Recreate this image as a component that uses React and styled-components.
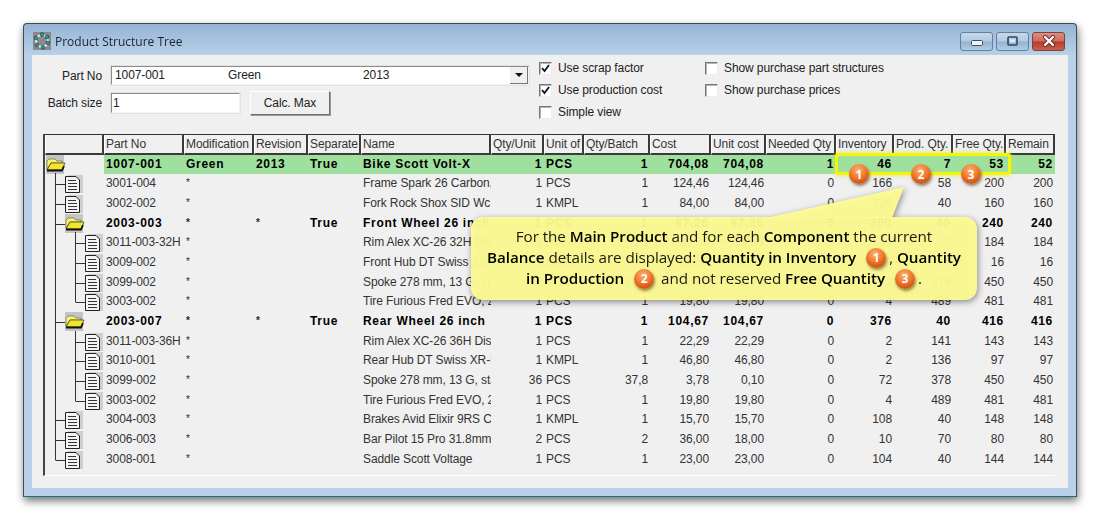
import React from 'react';
import styled, { createGlobalStyle } from 'styled-components';

const GlobalStyle = createGlobalStyle`
  html, body {
    margin: 0;
    padding: 0;
    background: #fff;
  }
  body {
    font-family: "Liberation Sans", Arial, sans-serif;
    font-size: 12px;
    letter-spacing: -0.1px;
    color: #222;
  }
`;

const COLUMNS = '59px 80px 70px 54px 53px 130px 53px 40px 66px 61px 55px 70px 58px 59px 53px 49px';
const ROW_HEIGHT = 19.67;

// Page + window frame
const Page = styled.div`
  width: 1099px;
  height: 519px;
  padding: 23px 0 0 23px;
  box-sizing: border-box;
  overflow: hidden;
`;

const Window = styled.div`
  width: 1054px;
  height: 474px;
  box-sizing: border-box;
  display: flex;
  flex-direction: column;
  border: 1px solid #3c4c58;
  border-bottom-color: #1f6f84;
  border-radius: 4px 4px 0 0;
  background: linear-gradient(180deg, #97b4d3 0, #b9d1ea 32px, #b9d1ea 100%);
  box-shadow: 1px 4px 9px rgba(0, 0, 0, 0.55);
  filter: blur(0.4px);
`;

const TitleBar = styled.div`
  height: 31px;
  flex: none;
  box-sizing: border-box;
  display: flex;
  align-items: center;
  padding: 3px 11px 0 9px;
  gap: 4px;
  font-family: "Open Sans", sans-serif;
  font-size: 12px;
  letter-spacing: 0;
  color: #1c2630;
`;

const TitleText = styled.span`
  flex: 1;
`;

const WindowButtons = styled.div`
  display: flex;
  gap: 3px;
`;

const WindowButton = styled.div`
  width: 33px;
  height: 19px;
  box-sizing: border-box;
  display: flex;
  align-items: center;
  justify-content: center;
  border: 1px solid ${p => (p.$close ? '#7d4339' : '#64809f')};
  border-radius: 3px;
  background: ${p =>
    p.$close
      ? 'linear-gradient(180deg, #dc8f83 0, #cf6a5c 48%, #b8392a 52%, #c9624f 100%)'
      : 'linear-gradient(180deg, #c6d8ea 0, #b3cae2 48%, #94b2d1 52%, #b3cce5 100%)'};
`;

const Client = styled.div`
  flex: 1;
  margin: 0 8px 8px;
  background: #f0f0f0;
  display: flex;
  flex-direction: column;
`;

// Form at the top
const Form = styled.div`
  height: 79px;
  flex: none;
  box-sizing: border-box;
  padding-top: 2px;
  display: flex;
`;

const Fields = styled.div`
  width: 507px;
  flex: none;
  margin-top: 8px;
  display: grid;
  grid-template-columns: 70px 1fr;
  grid-template-rows: 21px 23px;
  column-gap: 8px;
  row-gap: 5px;
  align-items: center;
`;

const FieldLabel = styled.label`
  text-align: right;
`;

const Sunken = styled.div`
  box-sizing: border-box;
  height: ${p => p.$height}px;
  width: ${p => p.$width}px;
  background: #fff;
  border: 2px solid;
  border-color: #8b8b8b #f4f4f4 #f4f4f4 #8b8b8b;
  outline: 1px solid #e2e2e2;
  outline-offset: -1px;
`;

const ComboBox = styled(Sunken)`
  display: flex;
  align-items: center;
  padding: 0 0 2px 3px;
`;

const ComboPart = styled.span`
  width: ${p => p.$width}px;
  flex: none;
`;

const ComboArrow = styled.div`
  margin: 2px 0 0 auto;
  width: 18px;
  height: 17px;
  display: flex;
  align-items: center;
  justify-content: center;
  background: #f0f0f0;
  border-right: 1px solid #777;
  border-bottom: 1px solid #777;
  box-sizing: border-box;
  &::after {
    content: '';
    border: 4px solid transparent;
    border-top: 4px solid #111;
    border-bottom: 0;
  }
`;

const BatchRow = styled.div`
  display: flex;
  align-items: center;
  gap: 9px;
`;

const BatchInput = styled(Sunken)`
  padding-left: 1px;
  line-height: 18px;
`;

const CalcButton = styled.div`
  width: 80px;
  height: 24px;
  box-sizing: border-box;
  display: flex;
  align-items: center;
  justify-content: center;
  background: #f0f0f0;
  border: 1px solid;
  border-color: #fff #707070 #707070 #fff;
  box-shadow: 1px 1px 0 #9a9a9a;
`;

const OptionColumn = styled.div`
  width: ${p => p.$width}px;
  flex: none;
  display: flex;
  flex-direction: column;
`;

const Option = styled.div`
  height: 22px;
  display: flex;
  align-items: center;
  gap: 6px;
`;

const CheckBox = styled.div`
  width: 13px;
  height: 13px;
  box-sizing: border-box;
  background: #fff;
  border: 1px solid;
  border-color: #777 #eee #eee #777;
  box-shadow: inset 1px 1px 0 #b5b5b5;
  display: flex;
`;

// Grid
const TableFrame = styled.div`
  position: relative;
  margin: 0 13px 12px 11px;
  flex: 1;
  box-sizing: border-box;
  border-top: 1px solid #333;
  border-left: 2px solid #444;
  border-bottom: 1px solid #fff;
`;

const Row = styled.div`
  display: grid;
  grid-template-columns: ${COLUMNS};
  height: ${ROW_HEIGHT}px;
`;

const HeaderCell = styled.div`
  height: 20px;
  box-sizing: border-box;
  border-right: 2px solid #3a3a3a;
  border-bottom: 2px solid #3a3a3a;
  border-left: 1px solid #fff;
  background: #f0f0f0;
  padding: 2px 0 0 1px;
  white-space: nowrap;
  overflow: hidden;
  color: #333;
`;

const Cell = styled.div`
  white-space: nowrap;
  overflow: hidden;
  line-height: ${ROW_HEIGHT}px;
  text-align: ${p => p.$align || 'left'};
  padding: 0 0 0 2px;
  margin-right: ${p => (p.$align === 'right' ? 2 : 0)}px;
  box-sizing: border-box;
  background: ${p => (p.$main ? '#9fe09f' : 'transparent')};
  color: ${p => (p.$bold ? '#000' : '#333')};
  font-weight: ${p => (p.$bold ? 700 : 400)};
  letter-spacing: ${p => (p.$bold ? '0.7px' : '-0.1px')};
  box-shadow: ${p => (p.$main && p.$align === 'right' ? '2px 0 0 #9fe09f' : 'none')};
`;

const Star = styled.span`
  display: inline-block;
  font-size: 10px;
  color: #2b2b2b;
  transform: translateY(-1px);
`;

const TreeCell = styled.div`
  height: ${ROW_HEIGHT}px;
  line-height: 0;
`;

const Highlight = styled.div`
  position: absolute;
  left: 790px;
  top: 18px;
  width: 176px;
  height: 22px;
  box-sizing: border-box;
  border: 3px solid #f6f600;
  border-radius: 3px;
  box-shadow: 0 0 5px rgba(210, 230, 60, 0.75);
`;

const Badge = styled.span`
  display: inline-flex;
  align-items: center;
  justify-content: center;
  width: 20px;
  height: 20px;
  border-radius: 50%;
  color: #fff;
  font-family: "Open Sans", sans-serif;
  font-size: 12px;
  font-weight: 700;
  letter-spacing: 0;
  vertical-align: middle;
  background: radial-gradient(circle at 45% 30%, #fbb276 0, #f0782a 45%, #c4470c 85%);
  box-shadow: 1px 2px 3px rgba(60, 40, 0, 0.55);
`;

const PinBadge = styled(Badge)`
  position: absolute;
  top: 29px;
  left: ${p => p.$left}px;
`;

const Callout = styled.div`
  position: absolute;
  left: 426px;
  top: 82px;
  width: 506px;
  height: 83px;
  filter: drop-shadow(1px 2px 3px rgba(0, 0, 0, 0.45));
`;

const CalloutTail = styled.svg`
  position: absolute;
  left: 0;
  top: -30px;
  overflow: visible;
`;

const CalloutBody = styled.div`
  height: 100%;
  box-sizing: border-box;
  padding-top: 9px;
  border-radius: 12px;
  background: rgba(254, 252, 146, 0.95);
  font-family: "Open Sans", sans-serif;
  font-size: 15.2px;
  line-height: 21px;
  letter-spacing: -0.05px;
  color: #1a1a10;
  text-align: center;
  white-space: nowrap;

  b {
    font-weight: 600;
    color: #000;
  }

  ${Badge} {
    margin: -2px 3px 0 10px;
  }
`;

// Drawings
const AppIcon = () => (
  <svg width="18" height="18" viewBox="0 0 18 18">
    <rect width="18" height="18" fill="#8a8a8a" />
    <circle cx="9" cy="9" r="6" fill="none" stroke="#e8ecec" strokeWidth="2" />
    {[[9, 2.5], [14, 5], [15, 11], [10, 15.5], [4, 13], [3, 6]].map(([cx, cy]) => (
      <circle key={cx + '-' + cy} cx={cx} cy={cy} r="1.9" fill="#2f9a96" stroke="#123" strokeWidth="0.5" />
    ))}
  </svg>
);

const Glyph = ({ type }) => {
  if (type === 'min') {
    return (
      <svg width="12" height="6" viewBox="0 0 12 6" style={{ marginTop: 4 }}>
        <rect x="0.5" y="0.5" width="11" height="5" rx="1" fill="#eef3f8" stroke="#3c4f66" />
      </svg>
    );
  }
  if (type === 'max') {
    return (
      <svg width="11" height="10" viewBox="0 0 11 10">
        <rect x="1" y="1" width="9" height="8" rx="1" fill="none" stroke="#33465c" strokeWidth="1.6" />
        <rect x="3" y="3.4" width="5" height="3" fill="#dfeaf5" />
      </svg>
    );
  }
  return (
    <svg width="14" height="12" viewBox="0 0 14 12">
      <path d="M3 2 L11 10 M11 2 L3 10" stroke="#5c2a22" strokeWidth="4" strokeLinecap="round" />
      <path d="M3 2 L11 10 M11 2 L3 10" stroke="#fff" strokeWidth="2.4" strokeLinecap="round" />
    </svg>
  );
};

const Check = () => (
  <svg width="11" height="11" viewBox="0 0 11 11">
    <path d="M2 5 L4.5 8 L9 2" fill="none" stroke="#111" strokeWidth="1.8" />
  </svg>
);

const DocIcon = ({ x }) => (
  <g transform={`translate(${x} 1)`}>
    <rect x="3" y="0" width="15" height="18" fill="#cfcfcf" />
    <path d="M0.5 1.5 H11 L14.5 5 V17.5 H0.5 Z" fill="#f4f4f4" stroke="#222" />
    <path d="M3 5.5 H11 M3 8.5 H12 M3 11.5 H12 M3 14.5 H12" stroke="#333" />
  </g>
);

const FolderIcon = ({ x }) => (
  <g transform={`translate(${x} 0)`}>
    <rect x="0" y="0" width="18" height="19" fill="#c4c4c4" />
    <path d="M1 6 L3 4 H9 L11 6 H16 V8 H5 L1 14 Z" fill="#fbf36a" stroke="#555" strokeWidth="0.6" />
    <path d="M1 15 L5 8 H19 L16 15 Z" fill="#f2e62c" stroke="#333" strokeWidth="0.7" />
    <path d="M1 15.5 H16 L18 11" fill="none" stroke="#111" strokeWidth="1.8" />
  </g>
);

const TreeGlyph = ({ depth, folder, last, inner }) => {
  const mid = 10;
  const iconX = depth === 0 ? 1 : depth === 1 ? 20 : 40;
  return (
    <svg width="59" height="20" viewBox="0 0 59 20" overflow="visible">
      <g stroke="#333" strokeWidth="1" fill="none">
        {depth === 0 && <path d="M10.5 16 V21" />}
        {depth >= 1 && <path d={`M10.5 -1 V${depth === 1 && last ? mid : 21}`} />}
        {depth === 1 && <path d={`M10.5 ${mid + 0.5} H20`} />}
        {depth === 1 && folder && <path d="M30.5 16 V21" />}
        {depth === 2 && <path d={`M30.5 -1 V${inner ? mid : 21}`} />}
        {depth === 2 && <path d={`M30.5 ${mid + 0.5} H40`} />}
      </g>
      {folder ? <FolderIcon x={iconX} /> : <DocIcon x={iconX} />}
    </svg>
  );
};

const headers = [
  '', 'Part No', 'Modification', 'Revision', 'Separate', 'Name', 'Qty/Unit', 'Unit of',
  'Qty/Batch', 'Cost', 'Unit cost', 'Needed Qty', 'Inventory', 'Prod. Qty.', 'Free Qty.', 'Remain',
];

const aligns = [
  'left', 'left', 'left', 'left', 'left', 'right', 'left', 'right',
  'right', 'right', 'right', 'right', 'right', 'right', 'right',
];

const rows = [
  { depth: 0, folder: true, bold: true, main: true, cells: ['1007-001', 'Green', '2013', 'True', 'Bike Scott Volt-X', '1', 'PCS', '1', '704,08', '704,08', '1', '46', '7', '53', '52'] },
  { depth: 1, cells: ['3001-004', '*', '', '', 'Frame Spark 26 Carbon, 29', '1', 'PCS', '1', '124,46', '124,46', '0', '166', '58', '200', '200'] },
  { depth: 1, cells: ['3002-002', '*', '', '', 'Fork Rock Shox SID Wc 120', '1', 'KMPL', '1', '84,00', '84,00', '0', '120', '40', '160', '160'] },
  { depth: 1, folder: true, bold: true, cells: ['2003-003', '*', '*', 'True', 'Front Wheel 26 inch', '1', 'PCS', '1', '87,26', '87,26', '0', '200', '40', '240', '240'] },
  { depth: 2, cells: ['3011-003-32H', '*', '', '', 'Rim Alex XC-26 32H Disc', '1', 'PCS', '1', '19,59', '19,59', '0', '184', '0', '184', '184'] },
  { depth: 2, cells: ['3009-002', '*', '', '', 'Front Hub DT Swiss 370', '1', 'KMPL', '1', '28,00', '28,00', '0', '12', '4', '16', '16'] },
  { depth: 2, cells: ['3099-002', '*', '', '', 'Spoke 278 mm, 13 G, stainless', '28', 'PCS', '29,4', '19,87', '0,71', '0', '72', '378', '450', '450'] },
  { depth: 2, inner: true, cells: ['3003-002', '*', '', '', 'Tire Furious Fred EVO, 26', '1', 'PCS', '1', '19,80', '19,80', '0', '4', '489', '481', '481'] },
  { depth: 1, folder: true, bold: true, cells: ['2003-007', '*', '*', 'True', 'Rear Wheel 26 inch', '1', 'PCS', '1', '104,67', '104,67', '0', '376', '40', '416', '416'] },
  { depth: 2, cells: ['3011-003-36H', '*', '', '', 'Rim Alex XC-26 36H Disc', '1', 'PCS', '1', '22,29', '22,29', '0', '2', '141', '143', '143'] },
  { depth: 2, cells: ['3010-001', '*', '', '', 'Rear Hub DT Swiss XR-I', '1', 'KMPL', '1', '46,80', '46,80', '0', '2', '136', '97', '97'] },
  { depth: 2, cells: ['3099-002', '*', '', '', 'Spoke 278 mm, 13 G, stainless', '36', 'PCS', '37,8', '3,78', '0,10', '0', '72', '378', '450', '450'] },
  { depth: 2, inner: true, cells: ['3003-002', '*', '', '', 'Tire Furious Fred EVO, 26', '1', 'PCS', '1', '19,80', '19,80', '0', '4', '489', '481', '481'] },
  { depth: 1, cells: ['3004-003', '*', '', '', 'Brakes Avid Elixir 9RS Carbon', '1', 'KMPL', '1', '15,70', '15,70', '0', '108', '40', '148', '148'] },
  { depth: 1, cells: ['3006-003', '*', '', '', 'Bar Pilot 15 Pro 31.8mm', '2', 'PCS', '2', '36,00', '18,00', '0', '10', '70', '80', '80'] },
  { depth: 1, last: true, cells: ['3008-001', '*', '', '', 'Saddle Scott Voltage', '1', 'PCS', '1', '23,00', '23,00', '0', '104', '40', '144', '144'] },
];

export default function App() {
  return (
    <Page>
      <GlobalStyle />
      <Window>
        <TitleBar>
          <AppIcon />
          <TitleText>Product Structure Tree</TitleText>
          <WindowButtons>
            <WindowButton><Glyph type="min" /></WindowButton>
            <WindowButton><Glyph type="max" /></WindowButton>
            <WindowButton $close><Glyph type="close" /></WindowButton>
          </WindowButtons>
        </TitleBar>
        <Client>
          <Form>
            <Fields>
              <FieldLabel>Part No</FieldLabel>
              <ComboBox $width={420} $height={21}>
                <ComboPart $width={113}>1007-001</ComboPart>
                <ComboPart $width={135}>Green</ComboPart>
                <ComboPart $width={40}>2013</ComboPart>
                <ComboArrow />
              </ComboBox>
              <FieldLabel>Batch size</FieldLabel>
              <BatchRow>
                <BatchInput $width={131} $height={22}>1</BatchInput>
                <CalcButton>Calc. Max</CalcButton>
              </BatchRow>
            </Fields>
            <OptionColumn $width={166}>
              <Option><CheckBox><Check /></CheckBox>Use scrap factor</Option>
              <Option><CheckBox><Check /></CheckBox>Use production cost</Option>
              <Option><CheckBox />Simple view</Option>
            </OptionColumn>
            <OptionColumn $width={200}>
              <Option><CheckBox />Show purchase part structures</Option>
              <Option><CheckBox />Show purchase prices</Option>
            </OptionColumn>
          </Form>
          <TableFrame>
            <Row>
              {headers.map((h, i) => (
                <HeaderCell key={i}>{h}</HeaderCell>
              ))}
            </Row>
            {rows.map((row, r) => (
              <Row key={r}>
                <TreeCell>
                  <TreeGlyph depth={row.depth} folder={row.folder} last={row.last} inner={row.inner} />
                </TreeCell>
                {row.cells.map((value, c) => (
                  <Cell key={c} $align={aligns[c]} $bold={row.bold} $main={row.main}>
                    {value === '*' ? <Star>*</Star> : value}
                  </Cell>
                ))}
              </Row>
            ))}
            <Highlight />
            <PinBadge $left={804}>1</PinBadge>
            <PinBadge $left={866}>2</PinBadge>
            <PinBadge $left={916}>3</PinBadge>
            <Callout>
              <CalloutTail width="506" height="30" viewBox="0 0 506 30">
                <path d="M295 31 L433 0 L421 31 Z" fill="rgba(254, 252, 146, 0.95)" />
              </CalloutTail>
              <CalloutBody>
                For the <b>Main Product</b> and for each <b>Component</b> the current
                <br />
                <b>Balance</b> details are displayed: <b>Quantity in Inventory</b>
                <Badge>1</Badge>, <b>Quantity</b>
                <br />
                <b>in Production</b>
                <Badge>2</Badge> and not reserved <b>Free Quantity</b>
                <Badge>3</Badge>.
              </CalloutBody>
            </Callout>
          </TableFrame>
        </Client>
      </Window>
    </Page>
  );
}
